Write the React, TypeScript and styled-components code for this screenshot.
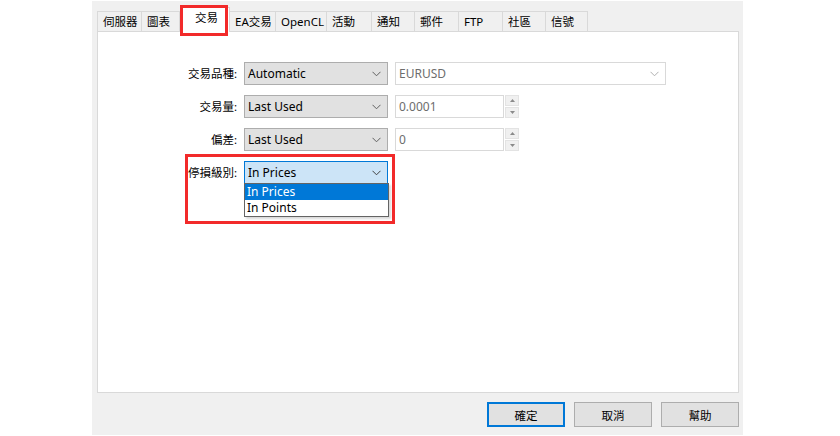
import React from "react";
import styled, { createGlobalStyle, css } from "styled-components";

const Global = createGlobalStyle`
  html, body { margin: 0; padding: 0; background: #ffffff; }
  body { font-family: "Noto Sans", "Noto Sans CJK TC", sans-serif; font-size: 12px; color: #000; }
`;

const Page = styled.div`
  width: 840px;
  height: 436px;
  padding-top: 1px;
  box-sizing: border-box;
`;

const Dialog = styled.div`
  position: relative;
  margin-left: 92px;
  width: 651px;
  height: 434px;
  background: #f0f0f0;
  box-sizing: border-box;
  padding: 0 4px 0 5px;
  display: flex;
  flex-direction: column;
`;

const TabStrip = styled.div`
  display: flex;
  align-items: flex-end;
  height: 30px;
  position: relative;
  z-index: 1;
`;

const Tab = styled.div<{ $w: number; $active?: boolean }>`
  width: ${(p) => p.$w}px;
  height: 20px;
  box-sizing: border-box;
  border: 1px solid #d9d9d9;
  border-bottom: none;
  border-left: none;
  background: #f0f0f0;
  display: flex;
  align-items: center;
  padding-left: 5px;
  font-size: 11.5px;
  line-height: 1;
  white-space: nowrap;
  &:first-child { border-left: 1px solid #d9d9d9; }
  ${(p) =>
    p.$active &&
    css`
      background: #ffffff;
      margin-bottom: -1px;
      height: 25px;
      padding-left: 15px;
      padding-bottom: 4px;
    `}
`;

const Panel = styled.div`
  position: relative;
  width: 642px;
  height: 362px;
  box-sizing: border-box;
  background: #ffffff;
  border: 1px solid #d9d9d9;
  padding-top: 30px;
`;

const Form = styled.div`
  display: grid;
  grid-template-columns: 139px 144px auto;
  column-gap: 7px;
  row-gap: 10px;
  align-items: center;
`;

const Label = styled.div`
  text-align: right;
  font-size: 11.5px;
  line-height: 23px;
  white-space: nowrap;
`;

const ComboBox = styled.div<{ $focused?: boolean }>`
  position: relative;
  height: 23px;
  box-sizing: border-box;
  border: 1px solid ${(p) => (p.$focused ? "#0078d7" : "#adadad")};
  background: ${(p) => (p.$focused ? "#cce4f7" : "#e1e1e1")};
  display: flex;
  align-items: center;
  padding-left: 3px;
  font-size: 12px;
`;

const Chevron = styled.svg`
  position: absolute;
  right: 6px;
  top: 8px;
`;

const Arrow = ({ color = "#606060" }: { color?: string }) => (
  <Chevron width="9" height="6" viewBox="0 0 9 6">
    <path d="M0.5 0.8 L4.5 4.8 L8.5 0.8" fill="none" stroke={color} strokeWidth="1" />
  </Chevron>
);

const WhiteCombo = styled.div`
  position: relative;
  width: 271px;
  height: 23px;
  box-sizing: border-box;
  border: 1px solid #d9d9d9;
  background: #ffffff;
  color: #6d6d6d;
  display: flex;
  align-items: center;
  padding-left: 3px;
  font-size: 12px;
`;

const Spin = styled.div`
  display: flex;
  gap: 1px;
  height: 23px;
`;

const SpinInput = styled.div`
  width: 109px;
  height: 23px;
  box-sizing: border-box;
  border: 1px solid #d9d9d9;
  background: #fff;
  color: #6d6d6d;
  display: flex;
  align-items: center;
  padding-left: 3px;
  font-size: 12px;
`;

const SpinButtons = styled.div`
  width: 14px;
  display: flex;
  flex-direction: column;
  gap: 1px;
`;

const SpinBtn = styled.div`
  flex: 1;
  box-sizing: border-box;
  border: 1px solid #e3e3e3;
  background: #f0f0f0;
  display: flex;
  align-items: center;
  justify-content: center;
`;

const Tri = ({ up }: { up?: boolean }) => (
  <svg width="5" height="3" viewBox="0 0 5 3">
    <path d={up ? "M0 3 L2.5 0 L5 3 Z" : "M0 0 L2.5 3 L5 0 Z"} fill="#8a8a8a" />
  </svg>
);

const DropAnchor = styled.div`
  position: relative;
`;

const DropList = styled.div`
  position: absolute;
  left: 0;
  top: 22px;
  width: 145px;
  box-sizing: border-box;
  border: 1px solid #646464;
  background: #ffffff;
  box-shadow: 2px 2px 2px rgba(0, 0, 0, 0.15);
  z-index: 3;
`;

const DropItem = styled.div<{ $sel?: boolean }>`
  height: 16px;
  line-height: 16px;
  padding-left: 2px;
  font-size: 12px;
  overflow: hidden;
  background: ${(p) => (p.$sel ? "#0078d7" : "#ffffff")};
  color: ${(p) => (p.$sel ? "#ffffff" : "#000000")};
`;

const HiddenCheck = styled.div`
  position: absolute;
  left: 4px;
  top: 35px;
  width: 8px;
  height: 6px;
  border-left: 1px solid #7a7a7a;
  border-bottom: 1px solid #7a7a7a;
  z-index: 2;
`;

const Highlight = styled.div<{ $l: number; $t: number; $w: number; $h: number }>`
  position: absolute;
  left: ${(p) => p.$l}px;
  top: ${(p) => p.$t}px;
  width: ${(p) => p.$w}px;
  height: ${(p) => p.$h}px;
  box-sizing: border-box;
  border: 3px solid #f22a2a;
  pointer-events: none;
  z-index: 5;
`;

const Buttons = styled.div`
  display: flex;
  justify-content: flex-end;
  gap: 9px;
  margin-top: 9px;
`;

const Button = styled.div<{ $default?: boolean }>`
  width: 78px;
  height: 25px;
  box-sizing: border-box;
  border: 1px solid ${(p) => (p.$default ? "#0078d7" : "#adadad")};
  box-shadow: ${(p) => (p.$default ? "inset 0 0 0 1px #0078d7" : "none")};
  background: #e1e1e1;
  display: flex;
  align-items: center;
  justify-content: center;
  font-size: 11.5px;
`;

const tabs: { t: string; w: number; active?: boolean }[] = [
  { t: "伺服器", w: 45 },
  { t: "圖表", w: 38 },
  { t: "交易", w: 50, active: true },
  { t: "EA交易", w: 46 },
  { t: "OpenCL", w: 51 },
  { t: "活動", w: 45 },
  { t: "通知", w: 43 },
  { t: "郵件", w: 44 },
  { t: "FTP", w: 44 },
  { t: "社區", w: 43 },
  { t: "信號", w: 42 },
];

export default function App() {
  return (
    <Page>
      <Global />
      <Dialog>
        <TabStrip>
          {tabs.map((t) => (
            <Tab key={t.t} $w={t.w} $active={t.active}>
              {t.t}
            </Tab>
          ))}
        </TabStrip>
        <Highlight $l={88} $t={4} $w={48} $h={31} />
        <Panel>
          <Form>
            <Label>交易品種:</Label>
            <ComboBox>
              Automatic
              <Arrow />
            </ComboBox>
            <WhiteCombo>
              EURUSD
              <Arrow color="#b0b0b0" />
            </WhiteCombo>

            <Label>交易量:</Label>
            <ComboBox>
              Last Used
              <Arrow />
            </ComboBox>
            <Spin>
              <SpinInput>0.0001</SpinInput>
              <SpinButtons>
                <SpinBtn>
                  <Tri up />
                </SpinBtn>
                <SpinBtn>
                  <Tri />
                </SpinBtn>
              </SpinButtons>
            </Spin>

            <Label>偏差:</Label>
            <ComboBox>
              Last Used
              <Arrow />
            </ComboBox>
            <Spin>
              <SpinInput>0</SpinInput>
              <SpinButtons>
                <SpinBtn>
                  <Tri up />
                </SpinBtn>
                <SpinBtn>
                  <Tri />
                </SpinBtn>
              </SpinButtons>
            </Spin>

            <Label>停損級別:</Label>
            <DropAnchor>
              <ComboBox $focused>
                In Prices
                <Arrow color="#404040" />
              </ComboBox>
              <HiddenCheck />
              <DropList>
                <DropItem $sel>In Prices</DropItem>
                <DropItem>In Points</DropItem>
              </DropList>
            </DropAnchor>
            <div />
          </Form>
          <Highlight $l={87} $t={122} $w={210} $h={70} />
        </Panel>
        <Buttons>
          <Button $default>確定</Button>
          <Button>取消</Button>
          <Button>幫助</Button>
        </Buttons>
      </Dialog>
    </Page>
  );
}
